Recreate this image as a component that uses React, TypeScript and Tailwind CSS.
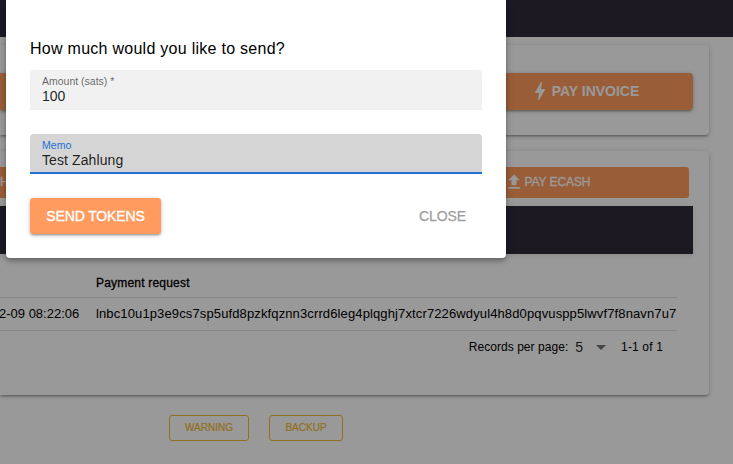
import { useState } from "react";

const PAYMENTS = [
  {
    date: "2-09 08:22:06",
    request: "lnbc10u1p3e9cs7sp5ufd8pzkfqznn3crrd6leg4plqghj7xtcr7226wdyul4h8d0pqvuspp5lwvf7f8navn7u7",
  },
];

const CARD_SHADOW = "shadow-[0_1px_5px_rgba(0,0,0,0.2),0_2px_2px_rgba(0,0,0,0.14),0_3px_1px_-2px_rgba(0,0,0,0.12)]";

function BoltIcon() {
  return (
    <svg viewBox="0 0 24 24" className="size-6 shrink-0" fill="currentColor">
      <path d="M11 21h-1l1-7H7.5c-.88 0-.33-.75-.31-.78C8.48 10.94 10.42 7.54 13.01 3h1l-1 7h3.51c.4 0 .62.19.4.66C12.97 17.55 11 21 11 21z" />
    </svg>
  );
}

function UploadIcon() {
  return (
    <svg viewBox="0 0 24 24" className="size-5 shrink-0" fill="currentColor">
      <path d="M9 16h6v-6h4l-7-7-7 7h4v6zm-4 2h14v2H5v-2z" />
    </svg>
  );
}

function Wallet() {
  return (
    <div className="h-full bg-white">
      <div className="h-[37px] bg-[#312b3b]" />

      {/* Lightning */}
      <div className={`mt-2 mr-6 h-[90px] rounded-r pt-7 pr-4 ${CARD_SHADOW}`}>
        <div className="flex justify-between">
          <button className={`h-[37px] w-[458px] bg-[#ff9b5e] ${CARD_SHADOW}`} />
          <button className={`flex h-[37px] w-[219px] items-center justify-center rounded bg-[#ff9b5e] pb-px text-sm font-bold text-white ${CARD_SHADOW}`}>
            <BoltIcon />
            PAY INVOICE
          </button>
        </div>
      </div>

      {/* Ecash */}
      <div className={`mt-4 mr-6 h-[244px] rounded-r pt-4 pr-4 ${CARD_SHADOW}`}>
        <div className="flex justify-between pr-1">
          <button className="h-[31px] w-[397px] bg-[#ff9b5e] pb-px text-left text-xs text-white [-webkit-text-stroke:0.3px]">H</button>
          <button className="flex h-[31px] w-[284px] items-center justify-center gap-px rounded-[3px] bg-[#ff9b5e] pb-px text-xs tracking-[-0.1px] text-white [-webkit-text-stroke:0.3px]">
            <UploadIcon />
            PAY ECASH
          </button>
        </div>
        <div className="mt-2 h-12 bg-[#312b3b] shadow-[0_1px_5px_rgba(0,0,0,0.1)]" />

        <table className="mt-[15px] w-[677px] table-fixed text-left text-[13px] whitespace-nowrap">
          <thead>
            <tr className="h-7 border-b border-black/12 text-xs">
              <th className="w-[88px]" />
              <th className="pl-2 font-normal tracking-[0.2px] [-webkit-text-stroke:0.3px]">Payment request</th>
            </tr>
          </thead>
          <tbody>
            {PAYMENTS.map((p) => (
              <tr key={p.request} className="h-[33px] border-b border-black/12">
                <td>
                  <span className="-ml-px">{p.date}</span>
                </td>
                <td className="pl-2 tracking-[0.125px]">{p.request}</td>
              </tr>
            ))}
          </tbody>
        </table>

        <div className="flex h-[33px] items-center justify-end pr-[30px] text-xs">
          <span className="tracking-[0.05px]">Records per page:</span>
          <span className="ml-[7px] text-sm text-black/87">5</span>
          <svg viewBox="0 0 10 5" className="mr-[15px] ml-[13px] h-[5px] w-[10px] text-black/54" fill="currentColor">
            <path d="M0 0h10L5 5z" />
          </svg>
          <span className="tracking-[0.15px]">1-1 of 1</span>
        </div>
      </div>

      <div className="mt-5 ml-[169px] flex gap-5 text-[10px] text-[#f2bb30] [-webkit-text-stroke:0.2px]">
        <button className="h-[26px] w-20 rounded-[3px] border border-current pb-px">WARNING</button>
        <button className="h-[26px] w-[74px] rounded-[3px] border border-current pb-px">BACKUP</button>
      </div>
    </div>
  );
}

function SendDialog() {
  const [amount, setAmount] = useState("100");
  const [memo, setMemo] = useState("Test Zahlung");

  return (
    <div className="ml-1.5 h-[258px] w-[500px] rounded-b bg-white px-6 pt-[37px] shadow-[0_2px_4px_-1px_rgba(0,0,0,0.2),0_4px_5px_rgba(0,0,0,0.14),0_1px_10px_rgba(0,0,0,0.12)]">
      <h6 className="h-[33px] text-base tracking-[0.27px]">How much would you like to send?</h6>
      <label className="flex h-10 flex-col rounded-t bg-[#f1f1f1] px-3 pt-1">
        <span className="text-[10.5px] leading-[14px] text-black/60">Amount (sats) *</span>
        <input value={amount} onChange={(e) => setAmount(e.target.value)} className="h-4 text-sm leading-4 text-black/87 outline-none" />
      </label>
      <label className="mt-6 flex h-10 flex-col rounded-t border-b-2 border-[#2371d3] bg-[#d5d5d5] px-3 pt-1">
        <span className="text-[10.6px] leading-[14px] text-[#2371d3]">Memo</span>
        <input value={memo} onChange={(e) => setMemo(e.target.value)} className="h-4 text-sm leading-4 tracking-[0.1px] text-black/87 outline-none" />
      </label>
      <div className="mt-6 flex items-center justify-between">
        <button className={`h-9 w-[131px] rounded-[3px] bg-[#ff9b5e] text-sm tracking-[-0.12px] text-white [-webkit-text-stroke:0.35px] ${CARD_SHADOW}`}>
          SEND TOKENS
        </button>
        <button className="h-9 px-4 text-sm tracking-[-0.1px] text-[#9e9e9e] [-webkit-text-stroke:0.25px]">CLOSE</button>
      </div>
    </div>
  );
}

export default function App() {
  return (
    <div className="relative h-[464px] w-[733px] overflow-hidden font-['Liberation_Sans',sans-serif] text-black">
      <Wallet />
      <div className="absolute inset-0 bg-black/40">
        <SendDialog />
      </div>
    </div>
  );
}
